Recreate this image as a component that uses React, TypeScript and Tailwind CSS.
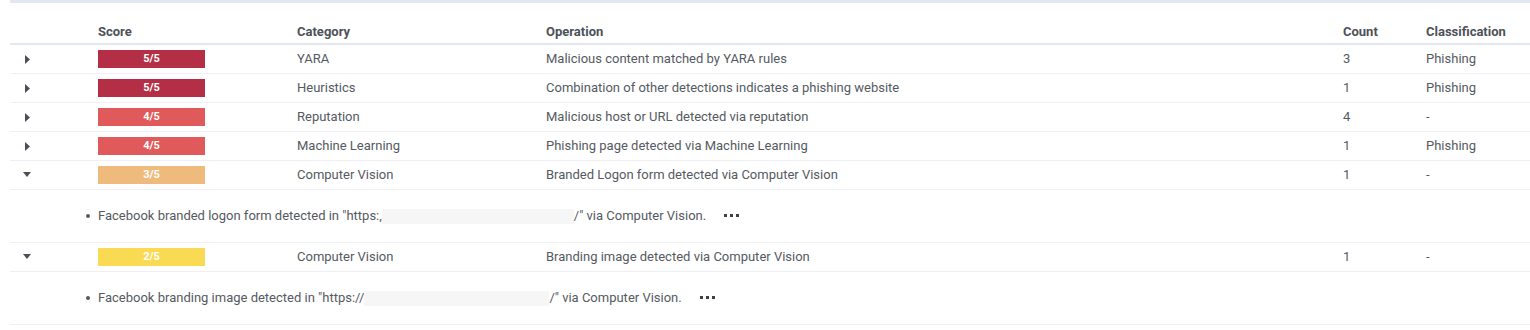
import React from "react";

type Row = {
  score: number;
  color: string;
  category: string;
  operation: string;
  count: string;
  classification: string;
  open?: boolean;
  detail?: { pre: string; maskW: string; post: string };
};

const rows: Row[] = [
  { score: 5, color: "bg-[#b42f46]", category: "YARA", operation: "Malicious content matched by YARA rules", count: "3", classification: "Phishing" },
  { score: 5, color: "bg-[#b42f46]", category: "Heuristics", operation: "Combination of other detections indicates a phishing website", count: "1", classification: "Phishing" },
  { score: 4, color: "bg-[#e15a5b]", category: "Reputation", operation: "Malicious host or URL detected via reputation", count: "4", classification: "-" },
  { score: 4, color: "bg-[#e15a5b]", category: "Machine Learning", operation: "Phishing page detected via Machine Learning", count: "1", classification: "Phishing" },
  {
    score: 3,
    color: "bg-[#eebb7c]",
    category: "Computer Vision",
    operation: "Branded Logon form detected via Computer Vision",
    count: "1",
    classification: "-",
    open: true,
    detail: { pre: 'Facebook branded logon form detected in "https:,', maskW: "w-[192px]", post: '/" via Computer Vision.' },
  },
  {
    score: 2,
    color: "bg-[#f9da52]",
    category: "Computer Vision",
    operation: "Branding image detected via Computer Vision",
    count: "1",
    classification: "-",
    open: true,
    detail: { pre: 'Facebook branding image detected in "https://', maskW: "w-[185px]", post: '/" via Computer Vision.' },
  },
];

function Caret({ open }: { open?: boolean }) {
  return open ? (
    <svg width="9" height="6" viewBox="0 0 9 6" className="ml-[13px]">
      <path d="M0 0 L8 0 L4 5 Z" fill="#4a4f5a" />
    </svg>
  ) : (
    <svg width="6" height="9" viewBox="0 0 6 9" className="ml-[15px]">
      <path d="M0 0 L5 4.5 L0 9 Z" fill="#4a4f5a" />
    </svg>
  );
}

export default function App() {
  return (
    <div className="w-[1530px] h-[330px] bg-white text-[13px] text-[#555a62]" style={{ fontFamily: "Roboto, 'Liberation Sans', sans-serif" }}>
      <div className="ml-[10px] h-[3px] bg-[#e2e7f1]" />
      <div className="ml-[10px]">
        <div className="flex h-[42px] items-end pb-[2px] font-bold text-[#4d5159] border-b-2 border-[#e2e7f1]">
          <div className="w-[88px]" />
          <div className="w-[199px]">Score</div>
          <div className="w-[249px]">Category</div>
          <div className="w-[797px]">Operation</div>
          <div className="w-[83px]">Count</div>
          <div className="flex-1">Classification</div>
        </div>
        {rows.map((r, i) => (
          <React.Fragment key={i}>
            <div className="flex h-[29px] items-center border-b border-[#eef0f6]">
              <div className="w-[88px] flex items-center">
                <Caret open={r.open} />
              </div>
              <div className="w-[199px]">
                <div className={`w-[107px] h-[18px] ${r.color} text-white font-bold text-[11px] flex items-center justify-center`}>
                  {r.score}/5
                </div>
              </div>
              <div className="w-[249px]">{r.category}</div>
              <div className="w-[797px]">{r.operation}</div>
              <div className="w-[83px]">{r.count}</div>
              <div className="flex-1">{r.classification}</div>
            </div>
            {r.detail && (
              <div className="flex h-[53px] items-center border-b border-[#eef0f6] pl-[76px]">
                <div className="flex items-center">
                  <span className="w-[4px] h-[4px] rounded-full bg-[#555a62] mr-[8px]" />
                  <span>{r.detail.pre}</span>
                  <span className={`${r.detail.maskW} h-[15px] bg-[#f6f6f6] inline-block`} />
                  <span>{r.detail.post}</span>
                  <span className="ml-[18px] flex gap-[3px] -mt-[2px]">
                    <span className="w-[3px] h-[3px] bg-[#3d4048]" />
                    <span className="w-[3px] h-[3px] bg-[#3d4048]" />
                    <span className="w-[3px] h-[3px] bg-[#3d4048]" />
                  </span>
                </div>
              </div>
            )}
          </React.Fragment>
        ))}
      </div>
    </div>
  );
}
